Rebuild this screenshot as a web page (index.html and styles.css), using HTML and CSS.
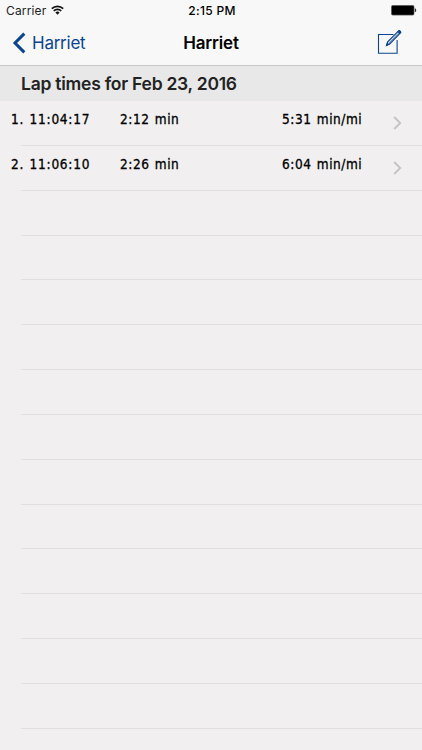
FILE: index.html
```html
<!DOCTYPE html>
<html lang="en">
<head>
    <meta charset="UTF-8">
    <meta name="viewport" content="width=device-width, initial-scale=1.0">
    <title>Harriet</title>
    <link rel="stylesheet" href="styles.css">
</head>
<body>
    <header class="top">
        <div class="status">
            <div class="carrier">
                <span>Carrier</span>
                <svg class="wifi" width="13" height="10" viewBox="0 0 13 10" fill="none" stroke="#111" stroke-width="1.7">
                    <path d="M.8 3.6a8.2 8.2 0 0 1 11.4 0M2.8 5.8a5.3 5.3 0 0 1 7.4 0" />
                    <path d="M4.4 7.5a3 3 0 0 1 4.2 0L6.5 9.7z" fill="#111" stroke="none" />
                </svg>
            </div>
            <span class="clock">2:15 PM</span>
            <svg class="battery" width="26" height="11" viewBox="0 0 26 11">
                <rect x=".5" y=".5" width="22.5" height="9.6" rx="1.3" fill="#000" stroke="#555" stroke-width=".7" />
                <path d="M23.8 3.6h.5q.9.3.9 1.7t-.9 1.7h-.5z" fill="#333" />
            </svg>
        </div>
        <nav class="nav">
            <a class="back">
                <svg width="14" height="22" viewBox="0 0 14 22" fill="none" stroke="#0b4490" stroke-width="3">
                    <path d="M12.3 1.6L3 11l9.3 9.4" />
                </svg>
                <span>Harriet</span>
            </a>
            <h1>Harriet</h1>
            <svg class="edit" width="26" height="26" viewBox="0 0 26 26" fill="none" stroke="#0b4490">
                <path d="M16.5 5.5H1.5v18.7h18.6V11" stroke-width="1.1" />
                <path d="M9.6 16.4l1.1-3.7L21.6 1.9q.8-.5 1.5.2l.3.3q.6.8 0 1.5L12.7 14.9z" fill="#f7f7f7" stroke-width="1.2" />
                <path d="M12 13.8L21.5 4.1" stroke-width=".7" />
                <path d="M20.6 2.8l2 2 .9-.9q.6-.8-.1-1.5l-.3-.3q-.8-.7-1.5-.2zM9.4 16.6l.9-2.7 1.5 1.5z" fill="#0b4490" stroke-width=".8" />
            </svg>
        </nav>
    </header>

    <h2 class="section">Lap times for Feb 23, 2016</h2>

    <ul class="laps">
        <li class="lap">
            <span class="start">1. 11:04:17</span>
            <span class="time">2:12 min</span>
            <span class="pace">5:31 min/mi</span>
            <svg class="chevron" width="9" height="14" viewBox="0 0 9 14"><path d="M1.2 1l6 6-6 6" /></svg>
        </li>
        <li class="lap">
            <span class="start">2. 11:06:10</span>
            <span class="time">2:26 min</span>
            <span class="pace">6:04 min/mi</span>
            <svg class="chevron" width="9" height="14" viewBox="0 0 9 14"><path d="M1.2 1l6 6-6 6" /></svg>
        </li>
        <!-- empty rows -->
        <li class="lap"></li>
        <li class="lap"></li>
        <li class="lap"></li>
        <li class="lap"></li>
        <li class="lap"></li>
        <li class="lap"></li>
        <li class="lap"></li>
        <li class="lap"></li>
        <li class="lap"></li>
        <li class="lap"></li>
        <li class="lap"></li>
        <li class="lap"></li>
    </ul>
</body>
</html>
```

FILE: styles.css
```css
* {
    box-sizing: border-box;
}
body {
    margin: 0;
    height: 750px;
    overflow: hidden;
    background: #f1eff0;
    font-family: Inter, "Liberation Sans", sans-serif;
    color: #000;
}
.top {
    height: 66px;
    background: #f8f8f8;
    border-bottom: 1px solid #c9c9c9;
}
.status {
    display: grid;
    grid-template-columns: 1fr auto 1fr;
    align-items: center;
    height: 22px;
    padding: 0 5px 0 6px;
    font-size: 12px;
    line-height: 22px;
}
.carrier {
    display: flex;
    align-items: center;
    gap: 5px;
    letter-spacing: 0.15px;
    color: #222;
}
.wifi {
    margin-bottom: 2px;
}
.clock {
    padding-left: 1px;
    font-weight: 500;
    letter-spacing: 0.3px;
}
.battery {
    justify-self: end;
    margin-bottom: 1px;
}
.nav {
    display: grid;
    grid-template-columns: 1fr auto 1fr;
    align-items: center;
    height: 42px;
    padding: 0 12px;
}
.back {
    display: flex;
    align-items: center;
    gap: 6px;
    font-size: 17px;
    letter-spacing: -0.25px;
    color: #0b4490;
}
.nav h1 {
    margin: 0;
    font-size: 17px;
    font-weight: 600;
    letter-spacing: -0.2px;
}
.edit {
    justify-self: end;
    margin: 0 7px 2px 0;
}
.section {
    height: 35px;
    margin: 0;
    padding-left: 21px;
    background: #e8e8e8;
    font-size: 17.5px;
    font-weight: 600;
    line-height: 35px;
    letter-spacing: -0.25px;
    color: #222;
}
.laps {
    margin: 0;
    padding: 0;
    list-style: none;
}
.lap {
    display: grid;
    grid-template-columns: 109px 162px 111px 9px;
    height: 44.85px;
    padding-left: 11px;
    background: linear-gradient(#dfdee0, #dfdee0) 21px 100% / 100% 1px no-repeat;
    font-family: "DejaVu Sans Condensed", "DejaVu Sans", sans-serif;
    font-size: 13.5px;
    font-stretch: condensed;
    line-height: 36px;
    letter-spacing: 0.55px;
    word-spacing: 0.9px;
    -webkit-text-stroke: 0.3px #000;
    white-space: nowrap;
}
.start {
    letter-spacing: 0.75px;
}
.chevron {
    margin-top: 15px;
    fill: none;
    stroke: #c3c3c6;
    stroke-width: 1.8;
}
```
